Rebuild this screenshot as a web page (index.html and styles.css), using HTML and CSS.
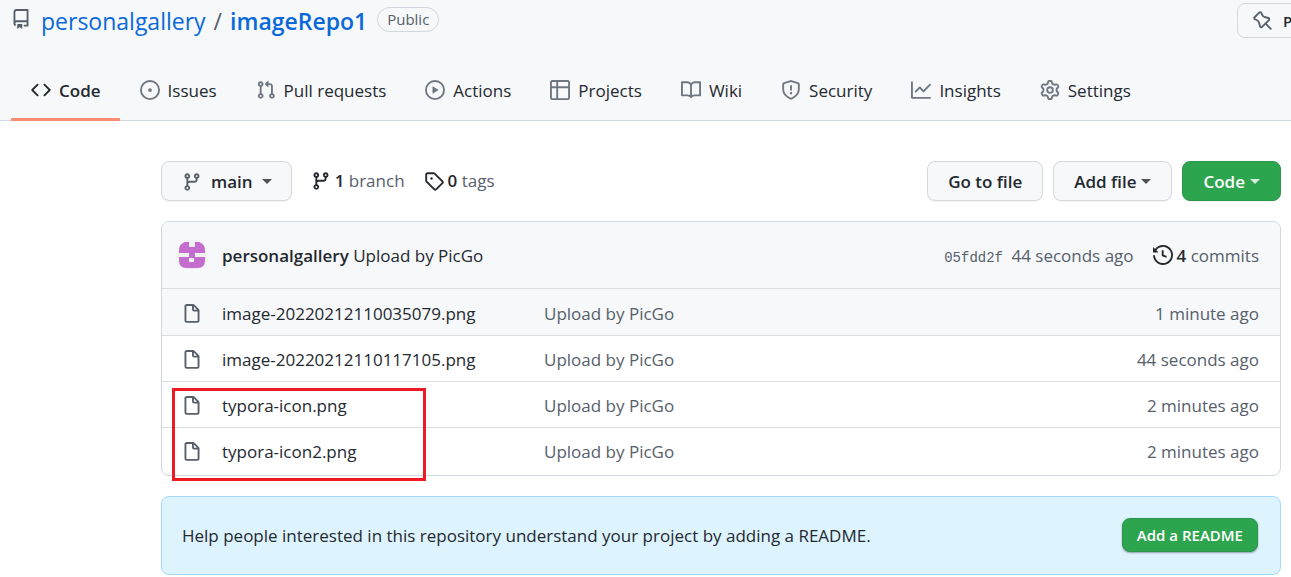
FILE: index.html
```html
<!DOCTYPE html>
<html lang="en">
<head>
<meta charset="utf-8">
<title>personalgallery/imageRepo1</title>
<link rel="stylesheet" href="styles.css">
</head>
<body>
<svg class="sprite" aria-hidden="true">
  <symbol id="i-branch" viewBox="0 0 16 16"><path fill-rule="evenodd" d="M11.75 2.5a.75.75 0 100 1.5.75.75 0 000-1.5zm-2.25.75a2.25 2.25 0 113 2.122V6A2.5 2.5 0 0110 8.5H6a1 1 0 00-1 1v1.128a2.251 2.251 0 11-1.5 0V5.372a2.25 2.25 0 111.5 0v1.836A2.492 2.492 0 016 7h4a1 1 0 001-1v-.628A2.25 2.25 0 019.5 3.25zM4.25 12a.75.75 0 100 1.5.75.75 0 000-1.5zM3.5 3.25a.75.75 0 111.5 0 .75.75 0 01-1.5 0z"/></symbol>
  <symbol id="i-file" viewBox="0 0 16 16"><path fill-rule="evenodd" d="M3.75 1.5a.25.25 0 00-.25.25v11.5c0 .138.112.25.25.25h8.5a.25.25 0 00.25-.25V6H9.75A1.75 1.75 0 018 4.25V1.5H3.75zm5.75.56v2.19c0 .138.112.25.25.25h2.19L9.5 2.06zM2 1.75C2 .784 2.784 0 3.75 0h5.086c.464 0 .909.184 1.237.513l3.414 3.414c.329.328.513.773.513 1.237v8.086A1.75 1.75 0 0112.25 15h-8.5A1.75 1.75 0 012 13.25V1.75z"/></symbol>
</svg>

<header class="header">
  <div class="title-row">
    <svg class="icon title-icon" viewBox="0 0 16 16"><path fill-rule="evenodd" d="M2 2.5A2.5 2.5 0 014.5 0h8.75a.75.75 0 01.75.75v12.5a.75.75 0 01-.75.75h-2.5a.75.75 0 110-1.5h1.75v-2h-8a1 1 0 00-.714 1.7.75.75 0 01-1.072 1.05A2.495 2.495 0 012 11.5v-9zm10.5-1V9h-8c-.356 0-.694.074-1 .208V2.5a1 1 0 011-1h8zM5 12.25v3.25a.25.25 0 00.4.2l1.45-1.087a.25.25 0 01.3 0L8.6 15.7a.25.25 0 00.4-.2v-3.25a.25.25 0 00-.25-.25h-3.5a.25.25 0 00-.25.25z"/></svg>
    <h1 class="title"><a href="#">personalgallery</a><span class="slash">/</span><a class="repo" href="#">imageRepo1</a></h1>
    <span class="badge">Public</span>
    <button class="pin" type="button"><svg class="icon" viewBox="0 0 16 16"><path fill-rule="evenodd" d="M4.456.734a1.75 1.75 0 012.826.504l.613 1.327a3.081 3.081 0 002.084 1.707l2.454.584c1.332.317 1.8 1.972.832 2.94L11.06 10l3.72 3.72a.75.75 0 11-1.061 1.06L10 11.06l-2.204 2.205c-.968.968-2.623.5-2.94-.832l-.584-2.454a3.081 3.081 0 00-1.707-2.084l-1.327-.613a1.75 1.75 0 01-.504-2.826L4.456.734zM5.92 1.866a.25.25 0 00-.404-.072L1.794 5.516a.25.25 0 00.072.404l1.328.613A4.582 4.582 0 015.73 9.63l.584 2.454a.25.25 0 00.42.12l5.47-5.47a.25.25 0 00-.12-.42L9.63 5.73a4.581 4.581 0 01-3.098-2.537L5.92 1.866z"/></svg>Pin</button>
  </div>
  <nav class="tabs" aria-label="Repository">
    <a class="tab current" href="#" aria-current="page"><svg class="icon" viewBox="0 0 16 16"><path fill-rule="evenodd" d="M4.72 3.22a.75.75 0 011.06 1.06L2.06 8l3.72 3.72a.75.75 0 11-1.06 1.06L.47 8.53a.75.75 0 010-1.06l4.25-4.25zm6.56 0a.75.75 0 10-1.06 1.06L13.94 8l-3.72 3.72a.75.75 0 101.06 1.06l4.25-4.25a.75.75 0 000-1.06l-4.25-4.25z"/></svg><span>Code</span></a>
    <a class="tab" href="#"><svg class="icon" viewBox="0 0 16 16"><path d="M8 9.5a1.5 1.5 0 100-3 1.5 1.5 0 000 3z"/><path fill-rule="evenodd" d="M8 0a8 8 0 100 16A8 8 0 008 0zM1.5 8a6.5 6.5 0 1113 0 6.5 6.5 0 01-13 0z"/></svg><span>Issues</span></a>
    <a class="tab" href="#"><svg class="icon" viewBox="0 0 16 16"><path fill-rule="evenodd" d="M7.177 3.073L9.573.677A.25.25 0 0110 .854v4.792a.25.25 0 01-.427.177L7.177 3.427a.25.25 0 010-.354zM3.75 2.5a.75.75 0 100 1.5.75.75 0 000-1.5zm-2.25.75a2.25 2.25 0 113 2.122v5.256a2.251 2.251 0 11-1.5 0V5.372A2.25 2.25 0 011.5 3.25zM11 2.5h-1V4h1a1 1 0 011 1v5.628a2.251 2.251 0 101.5 0V5A2.5 2.5 0 0011 2.5zm1 10.25a.75.75 0 111.5 0 .75.75 0 01-1.5 0zM3.75 12a.75.75 0 100 1.5.75.75 0 000-1.5z"/></svg><span>Pull requests</span></a>
    <a class="tab" href="#"><svg class="icon" viewBox="0 0 16 16"><path fill-rule="evenodd" d="M1.5 8a6.5 6.5 0 1113 0 6.5 6.5 0 01-13 0zM8 0a8 8 0 100 16A8 8 0 008 0zM6.379 5.227A.25.25 0 006 5.442v5.117a.25.25 0 00.379.214l4.264-2.559a.25.25 0 000-.428L6.379 5.227z"/></svg><span>Actions</span></a>
    <a class="tab" href="#"><svg class="icon" viewBox="0 0 16 16"><path fill-rule="evenodd" d="M0 1.75C0 .784.784 0 1.75 0h12.5C15.216 0 16 .784 16 1.75v12.5A1.75 1.75 0 0114.25 16H1.75A1.75 1.75 0 010 14.25V1.75zM1.5 6.5v7.75c0 .138.112.25.25.25H5v-8H1.5zM5 5H1.5V1.75a.25.25 0 01.25-.25H5V5zm1.5 1.5v8h7.75a.25.25 0 00.25-.25V6.5h-8zm8-1.5h-8V1.5h7.75a.25.25 0 01.25.25V5z"/></svg><span>Projects</span></a>
    <a class="tab" href="#"><svg class="icon" viewBox="0 0 16 16"><path fill-rule="evenodd" d="M0 1.75A.75.75 0 01.75 1h4.253c1.227 0 2.317.59 3 1.501A3.744 3.744 0 0111.006 1h4.245a.75.75 0 01.75.75v10.5a.75.75 0 01-.75.75h-4.507a2.25 2.25 0 00-1.591.659l-.622.621a.75.75 0 01-1.06 0l-.622-.621A2.25 2.25 0 005.258 13H.75a.75.75 0 01-.75-.75V1.75zm8.755 3a2.25 2.25 0 012.25-2.25H14.5v9h-3.757c-.71 0-1.4.201-1.992.572l.004-7.322zm-1.504 7.324l.004-5.073-.002-2.253A2.25 2.25 0 005.003 2.5H1.5v9h3.757a3.75 3.75 0 011.994.574z"/></svg><span>Wiki</span></a>
    <a class="tab" href="#"><svg class="icon" viewBox="0 0 16 16"><path fill-rule="evenodd" d="M7.467.133a1.75 1.75 0 011.066 0l5.25 1.68A1.75 1.75 0 0115 3.48V7c0 1.566-.32 3.182-1.303 4.682-.983 1.498-2.585 2.813-5.032 3.855a1.7 1.7 0 01-1.33 0c-2.447-1.042-4.049-2.357-5.032-3.855C1.32 10.182 1 8.566 1 7V3.48a1.75 1.75 0 011.217-1.667l5.25-1.68zm.61 1.429a.25.25 0 00-.153 0l-5.25 1.68a.25.25 0 00-.174.238V7c0 1.358.275 2.666 1.057 3.86.784 1.194 2.121 2.34 4.366 3.297a.2.2 0 00.154 0c2.245-.956 3.582-2.104 4.366-3.298C13.225 9.666 13.5 8.36 13.5 7V3.48a.25.25 0 00-.174-.237l-5.25-1.68zM9 10.5a1 1 0 11-2 0 1 1 0 012 0zm-.25-5.75a.75.75 0 10-1.5 0v3a.75.75 0 001.5 0v-3z"/></svg><span>Security</span></a>
    <a class="tab" href="#"><svg class="icon" viewBox="0 0 16 16"><path fill-rule="evenodd" d="M1.5 1.75a.75.75 0 00-1.5 0v12.5c0 .414.336.75.75.75h14.5a.75.75 0 000-1.5H1.5V1.75zm14.28 2.53a.75.75 0 00-1.06-1.06L10 7.94 7.53 5.47a.75.75 0 00-1.06 0L3.22 8.72a.75.75 0 001.06 1.06L7 7.06l2.47 2.47a.75.75 0 001.06 0l5.25-5.25z"/></svg><span>Insights</span></a>
    <a class="tab" href="#"><svg class="icon" viewBox="0 0 16 16"><path fill-rule="evenodd" d="M7.429 1.525a6.593 6.593 0 011.142 0c.036.003.108.036.137.146l.289 1.105c.147.56.55.967.997 1.189.174.086.341.183.501.29.417.278.97.423 1.53.27l1.102-.303c.11-.03.175.016.195.046.219.31.41.641.573.989.014.031.022.11-.059.19l-.815.806c-.411.406-.562.957-.53 1.456a4.588 4.588 0 010 .582c-.032.499.119 1.05.53 1.456l.815.806c.08.08.073.159.059.19a6.494 6.494 0 01-.573.99c-.02.029-.086.074-.195.045l-1.103-.303c-.559-.153-1.112-.008-1.529.27-.16.107-.327.204-.5.29-.449.222-.851.628-.998 1.189l-.289 1.105c-.029.11-.101.143-.137.146a6.613 6.613 0 01-1.142 0c-.036-.003-.108-.037-.137-.146l-.289-1.105c-.147-.56-.55-.967-.997-1.189a4.502 4.502 0 01-.501-.29c-.417-.278-.97-.423-1.53-.27l-1.102.303c-.11.03-.175-.016-.195-.046a6.492 6.492 0 01-.573-.989c-.014-.031-.022-.11.059-.19l.815-.806c.411-.406.562-.957.53-1.456a4.587 4.587 0 010-.582c.032-.499-.119-1.05-.53-1.456l-.815-.806c-.08-.08-.073-.159-.059-.19a6.44 6.44 0 01.573-.99c.02-.029.086-.075.195-.045l1.103.303c.559.153 1.112.008 1.529-.27.16-.107.327-.204.5-.29.449-.222.851-.628.998-1.189l.289-1.105c.029-.11.101-.143.137-.146zM8 0c-.236 0-.47.01-.701.03-.743.065-1.29.615-1.458 1.261l-.29 1.106c-.017.066-.078.158-.211.224a5.994 5.994 0 00-.668.386c-.123.082-.233.09-.3.071L3.27 2.776c-.644-.177-1.392.02-1.82.63a7.977 7.977 0 00-.704 1.217c-.315.675-.111 1.422.363 1.891l.815.806c.05.048.098.147.088.294a6.084 6.084 0 000 .772c.01.147-.038.246-.088.294l-.815.806c-.474.469-.678 1.216-.363 1.891.2.428.436.835.704 1.218.428.609 1.176.806 1.82.63l1.103-.303c.066-.019.176-.011.299.071.213.143.436.272.668.386.133.066.194.158.212.224l.289 1.106c.169.646.715 1.196 1.458 1.26a8.094 8.094 0 001.402 0c.743-.064 1.29-.614 1.458-1.26l.29-1.106c.017-.066.078-.158.211-.224a5.98 5.98 0 00.668-.386c.123-.082.233-.09.3-.071l1.102.302c.644.177 1.392-.02 1.82-.63.268-.382.505-.789.704-1.217.315-.675.111-1.422-.364-1.891l-.814-.806c-.05-.048-.098-.147-.088-.294a6.1 6.1 0 000-.772c-.01-.147.039-.246.088-.294l.814-.806c.475-.469.679-1.216.364-1.891a7.992 7.992 0 00-.704-1.218c-.428-.609-1.176-.806-1.82-.63l-1.103.303c-.066.019-.176.011-.299-.071a5.991 5.991 0 00-.668-.386c-.133-.066-.194-.158-.212-.224L10.16 1.29C9.99.645 9.444.095 8.701.031A8.094 8.094 0 008 0zm1.5 8a1.5 1.5 0 11-3 0 1.5 1.5 0 013 0zM11 8a3 3 0 11-6 0 3 3 0 016 0z"/></svg><span>Settings</span></a>
  </nav>
</header>

<main class="main">
  <div class="toolbar">
    <button class="btn branch-btn" type="button"><svg class="icon"><use href="#i-branch"/></svg>main<span class="caret"></span></button>
    <a class="stat" href="#"><svg class="icon"><use href="#i-branch"/></svg><span><b>1</b> branch</span></a>
    <a class="stat" href="#"><svg class="icon" viewBox="0 0 16 16"><path fill-rule="evenodd" d="M2.5 7.775V2.75a.25.25 0 01.25-.25h5.025a.25.25 0 01.177.073l6.25 6.25a.25.25 0 010 .354l-5.025 5.025a.25.25 0 01-.354 0l-6.25-6.25a.25.25 0 01-.073-.177zm-1.5 0V2.75C1 1.784 1.784 1 2.75 1h5.025c.464 0 .91.184 1.238.513l6.25 6.25a1.75 1.75 0 010 2.474l-5.026 5.026a1.75 1.75 0 01-2.474 0l-6.25-6.25A1.75 1.75 0 011 7.775zM6 5a1 1 0 100 2 1 1 0 000-2z"/></svg><span><b>0</b> tags</span></a>
    <div class="actions">
      <button class="btn" type="button">Go to file</button>
      <button class="btn" type="button">Add file<span class="caret"></span></button>
      <button class="btn primary" type="button">Code<span class="caret"></span></button>
    </div>
  </div>

  <section class="files">
    <div class="commit">
      <svg class="avatar" viewBox="0 0 30 30"><rect width="30" height="30" rx="15" fill="#f0f0f0"/><path fill="#c46dcf" d="M8 2h4v5h6V2h4q6 2 6 8v3H18v4h10v3q0 8-7 8H9q-7 0-7-8v-3h10v-4H2v-3q0-6 6-8z"/><path fill="#f0f0f0" d="M12 18h5v4h-5z"/></svg>
      <p class="commit-text"><a class="author" href="#">personalgallery</a> <a href="#">Upload by PicGo</a></p>
      <p class="commit-meta"><a class="hash" href="#">05fdd2f</a> <span>44 seconds ago</span></p>
      <a class="stat" href="#"><svg class="icon" viewBox="0 0 16 16"><path fill-rule="evenodd" d="M1.643 3.143L.427 1.927A.25.25 0 000 2.104V5.75c0 .138.112.25.25.25h3.646a.25.25 0 00.177-.427L2.715 4.215a6.5 6.5 0 11-1.18 4.458.75.75 0 10-1.493.154 8.001 8.001 0 101.6-5.684zM7.75 4a.75.75 0 01.75.75v2.992l2.028.812a.75.75 0 01-.557 1.392l-2.5-1A.75.75 0 017 8.25v-3.5A.75.75 0 017.75 4z"/></svg><span><b>4</b> commits</span></a>
    </div>
    <table class="table">
      <tbody>
        <tr class="hover"><td class="kind"><svg class="icon"><use href="#i-file"/></svg></td><td class="name"><a href="#">image-20220212110035079.png</a></td><td class="msg"><a href="#">Upload by PicGo</a></td><td class="age">1 minute ago</td></tr>
        <tr><td class="kind"><svg class="icon"><use href="#i-file"/></svg></td><td class="name"><a href="#">image-20220212110117105.png</a></td><td class="msg"><a href="#">Upload by PicGo</a></td><td class="age">44 seconds ago</td></tr>
        <tr><td class="kind"><svg class="icon"><use href="#i-file"/></svg></td><td class="name"><a href="#">typora-icon.png</a></td><td class="msg"><a href="#">Upload by PicGo</a></td><td class="age">2 minutes ago</td></tr>
        <tr><td class="kind"><svg class="icon"><use href="#i-file"/></svg></td><td class="name"><a href="#">typora-icon2.png</a></td><td class="msg"><a href="#">Upload by PicGo</a></td><td class="age">2 minutes ago</td></tr>
      </tbody>
    </table>
    <div class="highlight"></div>
  </section>

  <section class="notice">
    <p>Help people interested in this repository understand your project by adding a README.</p>
    <a class="btn primary small" href="#">Add a README</a>
  </section>
</main>
</body>
</html>
```
FILE: styles.css
```css
* { box-sizing: border-box; }

body {
  margin: 0;
  background: #fff;
  color: #24292f;
  font: 17px/26px "Segoe UI", "Open Sans", "Noto Sans", sans-serif;
  overflow-x: hidden;
}

a { color: inherit; text-decoration: none; }
p { margin: 0; }
b { font-weight: 600; color: #24292f; }
.sprite { display: none; }
.icon { width: 20px; height: 20px; flex: none; fill: currentColor; }

.header {
  background: #f6f8fa;
  box-shadow: inset 0 -1px #d0d7de;
  overflow: hidden;
}

.title-row {
  display: flex;
  align-items: center;
  height: 38px;
  padding: 3px 0 0 11px;
  color: #57606a;
}
.title-icon { margin: 0 10px 4px 0; }
.title {
  margin: 0;
  font-size: 23px;
  line-height: 36px;
  font-weight: 400;
  color: #0969da;
}
.slash { margin: 0 8px; color: #57606a; }
.repo { font-weight: 600; }
.badge {
  margin: 0 0 3px 10px;
  padding: 0 9px;
  border: 1px solid #d0d7de;
  border-radius: 20px;
  font-size: 15px;
  line-height: 23px;
  font-weight: 500;
}
.pin {
  display: flex;
  align-items: center;
  gap: 10px;
  flex: none;
  height: 35px;
  margin: 0 -31px 0 auto;
  padding: 0 15px;
  border: 1px solid #d5d8dc;
  border-radius: 8px;
  background: #f6f8fa;
  color: #24292f;
  font: 600 15px/20px "Segoe UI", "Open Sans", sans-serif;
}
.pin .icon { color: #57606a; }

.tabs { display: flex; margin-top: 23px; padding-left: 11px; }
.tab {
  display: flex;
  align-items: center;
  gap: 8px;
  height: 60px;
  padding: 0 19px 0 20px;
  border-bottom: 3px solid transparent;
  white-space: nowrap;
}
.tab span, .notice p { padding-top: 2px; }
.tab .icon { color: #6e7781; }
.tab.current { border-color: #fd8c73; font-weight: 600; }
.current .icon { color: #24292f; }

.main { padding: 40px 10px 2px 161px; }

.toolbar { display: flex; align-items: center; gap: 19px; }
.actions { display: flex; gap: 10px; margin-left: auto; }
.btn {
  display: flex;
  align-items: center;
  height: 40px;
  padding: 1px 20px 0;
  border: 1px solid #d5d8dc;
  border-radius: 8px;
  background: #f6f8fa;
  box-shadow: 0 1px 0 rgba(27, 31, 36, .04);
  color: #24292f;
  font: 600 17px/26px "Segoe UI", "Open Sans", sans-serif;
  white-space: nowrap;
}
.branch-btn { padding-right: 19px; }
.branch-btn .icon { margin-right: 9px; color: #57606a; }
.branch-btn .caret { margin-left: 9px; }
.caret {
  margin-left: 5px;
  border: 5px solid transparent;
  border-top-color: currentColor;
  border-bottom: 0;
  opacity: .8;
}
.primary {
  border-color: #2a964a;
  background: #2da44e;
  color: #fff;
}
.small {
  height: 34px;
  padding: 0 14px;
  font-size: 15px;
  box-shadow: 0 1px 2px rgba(27, 31, 36, .4);
}
.stat { display: flex; align-items: center; gap: 4px; color: #57606a; }
.stat .icon { color: #24292f; }

.files {
  position: relative;
  margin-top: 20px;
  border: 1px solid #d0d7de;
  border-radius: 8px;
}
.commit {
  display: flex;
  align-items: center;
  height: 66px;
  padding: 0 21px 0 15px;
  border-radius: 7px 7px 0 0;
  background: #f6f8fa;
  color: #57606a;
}
.commit p, .commit .stat span { padding-top: 2px; }
.avatar { width: 30px; height: 30px; margin-right: 15px; }
.commit-text { flex: 1; color: #24292f; }
.author { font-weight: 600; }
.hash { margin-right: 4px; font-family: "Liberation Mono", monospace; font-size: 14px; line-height: 20px; }
.commit .stat { margin-left: 19px; }

.table { width: 100%; border-spacing: 0; table-layout: fixed; }
.table td { height: 46px; padding: 2px 0 0; border-top: 1px solid #d8dee4; }
.table tr:first-child td { height: 47px; padding-top: 3px; }
.table tr:last-child td { height: 48px; padding-bottom: 1px; }
.hover { background: #f6f8fa; }
.kind { width: 60px; }
.table .kind { padding-left: 20px; }
.kind .icon { display: block; color: #57606a; }
.name { width: 322px; }
.msg, .age { color: #57606a; }
.table .age { padding-right: 21px; text-align: right; }
.highlight {
  position: absolute;
  left: 10px;
  bottom: -6px;
  width: 254px;
  height: 93px;
  border: 3px solid #ed1c24;
  pointer-events: none;
}

.notice {
  display: flex;
  align-items: center;
  justify-content: space-between;
  gap: 20px;
  margin-top: 20px;
  padding: 21px 22px 22px 20px;
  min-height: 79px;
  border: 1px solid #a5d8ff;
  border-radius: 8px;
  background: #ddf4ff;
}
```
